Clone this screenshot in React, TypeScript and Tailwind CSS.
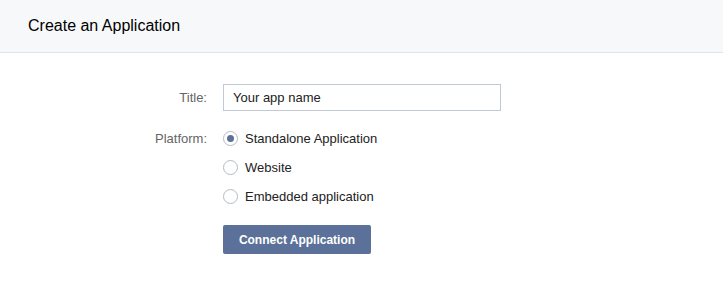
import React from "react";

function Radio({ checked, label }: { checked?: boolean; label: string }) {
  return (
    <label className="flex items-center h-[29px] gap-[7px] cursor-pointer">
      <span className="w-[15px] h-[15px] rounded-full border border-[#b4bcc6] bg-white flex items-center justify-center">
        {checked && <span className="w-[7px] h-[7px] rounded-full bg-[#5b7199]" />}
      </span>
      <span className="text-[13px] text-[#222]">{label}</span>
    </label>
  );
}

export default function App() {
  return (
    <div className="w-[723px] h-[283px] bg-white" style={{ fontFamily: '"Liberation Sans", Arial, sans-serif' }}>
      <div className="h-[53px] bg-[#f7f8fa] border-b border-[#e1e3e8] flex items-center pl-[28px]">
        <h1 className="text-[16px] text-[#000] leading-none">Create an Application</h1>
      </div>
      <div className="pt-[31px] grid grid-cols-[207px_1fr] gap-x-[16px]">
        <div className="text-right text-[13px] text-[#656565] h-[27px] leading-[27px]">Title:</div>
        <div>
          <input
            className="w-[278px] h-[27px] border border-[#c0cad5] px-[9px] text-[13px] text-[#222] outline-none placeholder:text-[#222]"
            placeholder="Your app name"
            style={{ fontFamily: '"Liberation Sans", Arial, sans-serif' }}
          />
        </div>
        <div className="text-right text-[13px] text-[#656565] mt-[13px] h-[29px] leading-[29px]">Platform:</div>
        <div className="mt-[13px] flex flex-col">
          <Radio checked label="Standalone Application" />
          <Radio label="Website" />
          <Radio label="Embedded application" />
        </div>
        <div />
        <div className="mt-[14px]">
          <button className="w-[148px] h-[29px] rounded-[2px] bg-[#5b7199] text-white text-[12px] font-bold">
            Connect Application
          </button>
        </div>
      </div>
    </div>
  );
}
